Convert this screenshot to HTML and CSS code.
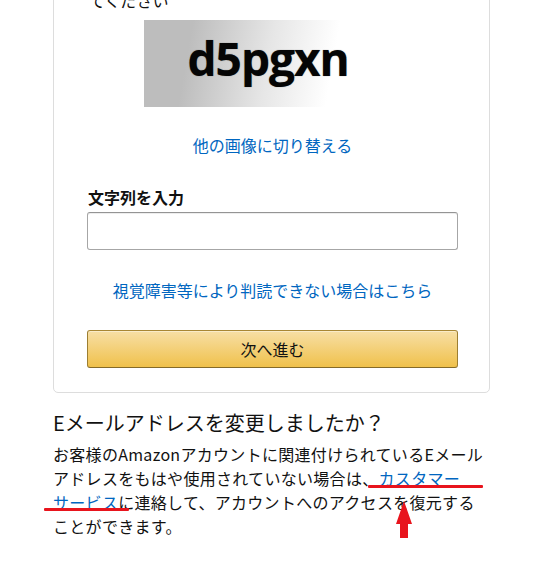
FILE: index.html
```html
<!DOCTYPE HTML>
<html>
<head>
    <meta charset="utf-8">
    <meta name="viewport" content="width = device-width, user-scalable=0">
    <title>文字を入力してください</title>
    <link rel="stylesheet" href="styles.css">
</head>
<body>
<div class="page">
    <div class="box">
        <p class="lead">てください</p>

        <div class="captcha-row">
            <div class="captcha">
                <span class="captcha-text">d5pgxn</span>
            </div>
        </div>

        <p class="center"><a class="link" href="#">他の画像に切り替える</a></p>

        <label class="field-label" for="guess">文字列を入力</label>
        <input id="guess" class="field" type="text">

        <p class="center audio"><a class="link" href="#">視覚障害等により判読できない場合はこちら</a></p>

        <button class="btn-primary" type="button">次へ進む</button>
    </div>

    <div class="help">
        <h4 class="help-title">Eメールアドレスを変更しましたか？</h4>
        <p class="help-text">
            お客様のAmazonアカウントに関連付けられているEメール<br>アドレスをもはや使用されていない場合は、<a class="link" href="#">カスタマー<br>サービス</a>に連絡して、アカウントへのアクセスを復元する<br>ことができます。
            <!-- red markers over the support link -->
            <span class="mark mark-a"></span>
            <span class="mark mark-b"></span>
            <svg class="mark-arrow" viewBox="0 0 16 50">
                <path d="M 8,0 L 16,23 L 12,23 L 12,50 L 4,50 L 4,23 L 0,23 Z"/>
            </svg>
        </p>
    </div>
</div>
</body>
</html>
```

FILE: styles.css
```css
body, html {
    background-color: #ffffff;
    padding: 0;
    margin: 0;
    color: #111111;
    font-family: "Noto Sans CJK JP", "Noto Sans", sans-serif;
    font-size: 16px;
    line-height: 24px;
}

.page {
    width: 437px;
    margin-left: 53px;
}

.box {
    margin-top: -13px;
    padding: 0 31px 24px 33px;
    border: 1px solid #dddddd;
    border-radius: 5px;
    display: flex;
    flex-direction: column;
}

.lead {
    margin: 0 0 0 2px;
}

.captcha-row {
    margin-top: 8px;
    display: flex;
    justify-content: center;
}

.captcha {
    width: 258px;
    height: 87px;
    background: linear-gradient(100deg, #bdbdbd 18%, #e6e6e6 48%, #ffffff 72%);
}

.captcha-text {
    display: block;
    padding-left: 44px;
    font-family: "Open Sans", sans-serif;
    font-weight: 700;
    font-size: 46px;
    line-height: 77px;
    letter-spacing: -1px;
    color: #050505;
    text-shadow: 0 0 1px rgba(0, 0, 0, 0.5);
}

.center {
    margin: 26px 0 0;
    text-align: center;
}

.link {
    color: #0066c0;
    text-decoration: none;
}

.field-label {
    margin-top: 28px;
    padding-left: 1px;
    font-weight: 700;
}

.field {
    margin: 3px 0 0;
    box-sizing: border-box;
    width: 100%;
    height: 38px;
    border: 1px solid #a6a6a6;
    border-top-color: #949494;
    border-radius: 3px;
    box-shadow: 0 1px 0 rgba(255, 255, 255, 0.5), 0 1px 0 rgba(0, 0, 0, 0.07) inset;
    font-size: 16px;
    outline: none;
}

.audio {
    margin-top: 28px;
}

.btn-primary {
    margin-top: 28px;
    width: 100%;
    height: 38px;
    border: 1px solid;
    border-color: #a88734 #9c7e31 #846a29;
    border-radius: 3px;
    background: linear-gradient(to bottom, #f7dfa5, #f0c14b);
    box-shadow: 0 1px 0 rgba(255, 255, 255, 0.4) inset;
    font-family: inherit;
    font-size: 16px;
    color: #111111;
}

.help-title {
    margin: 16px 0 0;
    font-size: 20px;
    line-height: 28px;
    font-weight: 400;
}

.help-text {
    position: relative;
    margin: 5px 0 0;
    white-space: nowrap;
    letter-spacing: 0.3px;
}

.mark {
    position: absolute;
    height: 3px;
    background-color: #e8141d;
    border-radius: 1px;
}

.mark-a {
    left: 315px;
    top: 43px;
    width: 115px;
}

.mark-b {
    left: -9px;
    top: 66px;
    width: 85px;
}

.mark-arrow {
    position: absolute;
    left: 343px;
    top: 59px;
    width: 16px;
    height: 50px;
    fill: #e8141d;
}
```
